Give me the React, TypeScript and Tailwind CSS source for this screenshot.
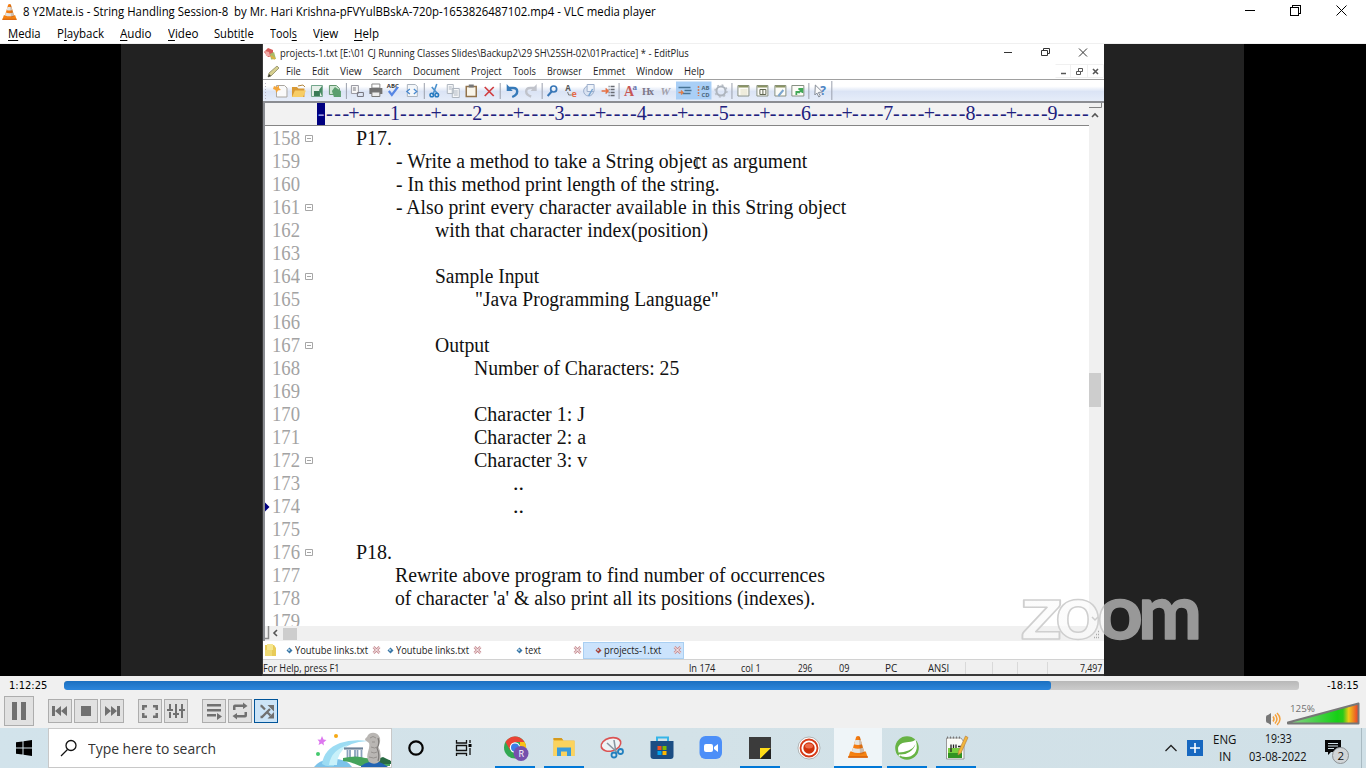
import { useLayoutEffect, useRef, type ReactNode } from "react";

/** Text whose glyphs are condensed or widened to fill the box it is given. */
function Fit({ children, className = "" }: { children: ReactNode; className?: string }) {
  const box = useRef<HTMLSpanElement>(null);
  const text = useRef<HTMLSpanElement>(null);
  useLayoutEffect(() => {
    if (box.current && text.current) {
      const natural = text.current.offsetWidth;
      if (natural > 0) text.current.style.transform = `scaleX(${box.current.clientWidth / natural})`;
    }
  }, []);
  return (
    <span ref={box} className={`inline-block shrink-0 whitespace-pre ${className}`}>
      <span ref={text} className="inline-block origin-left">
        {children}
      </span>
    </span>
  );
}

function Cone({ className }: { className: string }) {
  return (
    <svg className={className} viewBox="0 0 20 22">
      <path d="M2.2 15.5h15.6l2 6H.2z" fill="#f58312" />
      <path d="M.2 20.2h19.6v1.6H.2z" fill="#d9620b" />
      <path d="M8.2.8q1.800-1.400 3.600 0L16.500 17q-6.500 3.400-13 0z" fill="#f47b10" />
      <path d="M7.300 4h5.400l1.300 4.300q-4 1.600-8 0zM5 11.800q5 1.800 10 0l1.200 3.900q-6.200 2.400-12.400 0z" fill="#e4e4e1" />
      <path d="M11.800.8 16.500 17q-2.200 1.200-4.300 1.500L10.600.3z" fill="#8a4a20" opacity=".25" />
    </svg>
  );
}

const menus: [string, string, string, string, string][] = [
  ["", "M", "edia", "w-[33px]", "mr-[16px]"],
  ["P", "l", "ayback", "w-[47px]", "mr-[16px]"],
  ["", "A", "udio", "w-[32px]", "mr-[16px]"],
  ["", "V", "ideo", "w-[30px]", "mr-[16px]"],
  ["Subti", "t", "le", "w-[40px]", "mr-[16px]"],
  ["Tool", "s", "", "w-[27px]", "mr-[16px]"],
  ["V", "i", "ew", "w-[25px]", "mr-[16px]"],
  ["", "H", "elp", "w-[25px]", ""],
];

function VlcHeader() {
  return (
    <header className="h-[44px] border-b border-[#f0f0f0] bg-white text-[12px] text-black">
      <div className="flex h-[23px] items-center pl-[2px]">
        <Cone className="mt-px h-[16px] w-[15px]" />
        <Fit className="ml-[6px] w-[633px] leading-[23px]">
          8 Y2Mate.is - String Handling Session-8{"  "}by Mr. Hari Krishna-pFVYulBBskA-720p-1653826487102.mp4 - VLC media player
        </Fit>
        <svg className="ml-auto h-[23px] w-[130px] text-black" viewBox="1236 0 130 23" fill="none" stroke="currentColor" shapeRendering="crispEdges">
          <path d="M1245 10.5h10M1290.500 7.500h8v8h-8zM1292.500 7v-1.500h8v8h-1.500" />
          <path d="M1336.500 5.500l10 10M1346.500 5.500l-10 10" shapeRendering="auto" />
        </svg>
      </div>
      <nav className="flex h-[20px] items-center pt-[2px] pl-[8px]">
        {menus.map(([a, u, b, w, m]) => (
          <Fit key={a + u + b} className={`${w} ${m} leading-[18px]`}>
            {a}
            <span className="underline decoration-1 underline-offset-2">{u}</span>
            {b}
          </Fit>
        ))}
      </nav>
    </header>
  );
}

const editorMenus: [string, string][] = [
  ["File", "ml-[6px] w-[15px]"],
  ["Edit", "ml-[11px] w-[17px]"],
  ["View", "ml-[11px] w-[22px]"],
  ["Search", "ml-[11px] w-[29px]"],
  ["Document", "ml-[11px] w-[47px]"],
  ["Project", "ml-[11px] w-[31px]"],
  ["Tools", "ml-[11px] w-[23px]"],
  ["Browser", "ml-[11px] w-[35px]"],
  ["Emmet", "ml-[11px] w-[32px]"],
  ["Window", "ml-[11px] w-[37px]"],
  ["Help", "ml-[11px] w-[21px]"],
];

function Toolbar() {
  return (
    <svg className="block h-[21px] w-full" viewBox="262 80 842 21" fill="none">
      <path d="M264.500 83v16" stroke="#b9b4c4" strokeDasharray="1 2" />
      <path d="M345.500 83v16M423.500 83v16M499.500 83v16M541.500 83v16M618.500 83v16M731.500 83v16M808.500 83v16M831.500 81v19" stroke="#9ba0ad" />
      <path d="M675.500 81.500h35.500v18h-35.500z" fill="#a9cff6" />
      {/* new, open, save, save all */}
      <path d="M275.500 85.500h8l2.500 2.500v9h-10.500z" fill="#fafafa" stroke="#aaa6a0" />
      <path d="m273 86 3 1 2-2v3l2 2-3 .500-1.500 2.500-1-3-2.500-1z" fill="#f4a63a" />
      <path d="M291 87h5l1.500 1.500h6V97H291z" fill="#d99a35" />
      <path d="m291 97 3-6.500h11l-3 6.500z" fill="#f7cd66" />
      <path d="m297 86 5-1 2 2" stroke="#b0843c" />
      <path d="M310.500 85.500h11v11h-11z" fill="#e6efe9" stroke="#72a68c" />
      <path d="M313 91h6v5h-6z" fill="#397a56" />
      <path d="m318 90 3-4v10z" fill="#41885f" />
      <path d="M328.500 85.500h7l3 3v6h-10z" fill="#cfe6d4" stroke="#62956c" />
      <path d="m331 91 3-4 6 4v6h-7z" fill="#5b9f6f" />
      {/* print preview, print, spell, source */}
      <path d="M350.500 85.500h7v8h-7z" fill="#f7f7f7" stroke="#9a9aa3" />
      <path d="M352 88h3m-3 2h3M356.500 92.500h6v4h-6z" stroke="#75757e" />
      <path d="M371 84h8v4h-8z" fill="#fff" stroke="#8a8a8a" />
      <path d="M368.500 88h13v6h-13z" fill="#727272" />
      <path d="M371 92h8v4.500h-8z" fill="#eee" stroke="#777" />
      <text x="386" y="88.500" fontSize="6" fontWeight="700" fill="#333" textLength="12">ABC</text>
      <path d="m388 91 3 4 6-8" stroke="#5686e4" strokeWidth="2.200" />
      <path d="M406.500 84.500h8l2 2v10h-10z" fill="#f4f7fa" stroke="#aab3bd" />
      <path d="m409 89-3 2.500 3 2.500m4-5 3 2.500-3 2.500" stroke="#4a89cf" strokeWidth="1.300" />
      {/* cut, copy, paste, delete */}
      <path d="m436 84-4 11m-1-8 6 7" stroke="#4b91cd" strokeWidth="1.600" />
      <circle cx="431" cy="95" r="1.800" stroke="#267abf" strokeWidth="1.500" />
      <circle cx="436" cy="95" r="1.800" stroke="#267abf" strokeWidth="1.500" />
      <path d="M446.500 84.500h6v9h-6zM451.500 88.500h7v9h-7z" fill="#f7f8f9" stroke="#afb6bf" />
      <path d="M448 87h3m-3 2h3m2 2h4m-4 2h4m-4 2h4" stroke="#aeb7c1" />
      <path d="M465.500 86.500h10v10h-10z" fill="#f9f5ea" stroke="#92734b" strokeWidth="1.500" />
      <path d="M468 84.500h5v3h-5z" fill="#777" />
      <path d="m484 87 9 9m0-9-9 9" stroke="#d13d3f" strokeWidth="1.700" />
      {/* undo, redo */}
      <path d="M507.500 88h5q4 0 4 3.500t-5 5.500" stroke="#367ab9" strokeWidth="2.400" />
      <path d="M506 84v7h6z" fill="#367ab9" />
      <path d="M534.500 88h-5q-4 0-4 3.500t5 5" stroke="#c0c3cb" strokeWidth="2.400" />
      <path d="M536 84v7h-6z" fill="#c0c3cb" />
      {/* find, replace, find in files, goto */}
      <circle cx="553" cy="89" r="3" stroke="#3977b7" strokeWidth="1.700" />
      <path d="m551 91.500-4 4.500" stroke="#3977b7" strokeWidth="2" />
      <text x="564.500" y="91" fontSize="8" fontWeight="700" fill="#555">A</text>
      <text x="571" y="97" fontSize="9" fontWeight="700" fill="#e46c49">e</text>
      <path d="m567 92 1 3h3" stroke="#777" />
      <circle cx="588" cy="91" r="5" fill="#dae3f2" stroke="#9baecb" />
      <path d="M586.500 84.500h7v7h-7z" fill="#eef3fa" stroke="#9daecb" />
      <path d="m592 89-4 7" stroke="#78a5d1" strokeWidth="1.500" />
      <path d="M601 91h6m-2-2.500 2.500 2.500-2.500 2.500" stroke="#e66e3f" strokeWidth="1.500" />
      <path d="M608 86.500h1m1 0h4m-6 3h1m1 0h4m-6 3h1m1 0h4m-6 3h1m1 0h4" stroke="#686b73" strokeWidth="1.300" />
      {/* fonts and view toggles */}
      <text x="623.500" y="96.500" fontFamily="Liberation Serif" fontSize="14" fontWeight="700" fill="#c85855">A</text>
      <text x="632" y="90" fontFamily="Liberation Serif" fontSize="9" fontWeight="700" fill="#6775ae">a</text>
      <text x="641.500" y="95" fontFamily="Liberation Serif" fontSize="10.500" fontWeight="700" fill="#7d7788" textLength="12">Hx</text>
      <text x="660" y="95" fontFamily="Liberation Serif" fontSize="11" fontStyle="italic" fontWeight="700" fill="#a2a0aa">W</text>
      <path d="M678 87.500h12m-6 3h7m-9 3h8" stroke="#477395" strokeWidth="1.500" />
      <path d="M678 92.500h4m-1.500-2 2 2-2 2" stroke="#de804e" strokeWidth="1.300" />
      <path d="M698 86v10" stroke="#d47c55" strokeDasharray="2 1" strokeWidth="1.500" />
      <text x="701" y="90" fontSize="5" fontWeight="700" fill="#49657a" textLength="8" lengthAdjust="spacingAndGlyphs">AB</text>
      <text x="701" y="97" fontSize="5" fontWeight="700" fill="#49657a" textLength="8" lengthAdjust="spacingAndGlyphs">CD</text>
      <circle cx="720.500" cy="91" r="4.500" stroke="#adb4bd" strokeWidth="2" />
      <circle cx="720.500" cy="91" r="6" stroke="#b6bcc4" strokeWidth="1.400" strokeDasharray="2 2.700" />
      {/* windows */}
      <g fill="#fcfcf7" stroke="#879083">
        <path d="M737.500 85.500h11v10.500h-11zM756.500 85.500h11v10.500h-11zM774.500 85.500h11v10.500h-11zM791.500 85.500h12v10.500h-12z" />
      </g>
      <path d="M738 86.500h10m9 0h10m8 0h10" stroke="#8b9463" strokeWidth="2" />
      <path d="M740 90h7m-7 2h7m-7 2h7" stroke="#e0dcc0" />
      <path d="M759.500 89.500h6v5h-6zM762.500 89v6" stroke="#5e654f" />
      <path d="m783 90-5 6" stroke="#7ca6cf" strokeWidth="2" />
      <path d="M796 95v-3h3m-1-3h4v4m-4 0 4-4" stroke="#41a856" strokeWidth="1.800" />
      <path d="m815 85 7 7-4 .500 2 3.500-1.500 1-2-4-2 2z" fill="#fafafa" stroke="#878e98" />
      <text x="820" y="95" fontSize="12" fontWeight="700" fill="#4b83c3">?</text>
    </svg>
  );
}

const rulerCells = Array.from({ length: 94 }, (_, i) => {
  const n = i + 1;
  if (n % 10 === 0) return String(n / 10);
  return n % 5 === 0 ? "+" : "-";
});

type Line = { n: number; fold?: boolean; at?: string; text?: string; mark?: boolean };

const lines: Line[] = [
  { n: 158, fold: true, at: "ml-[42px] w-[36px]", text: "P17." },
  { n: 159, at: "ml-[82px] w-[411px]", text: "- Write a method to take a String object as argument" },
  { n: 160, at: "ml-[82px] w-[324px]", text: "- In this method print length of the string." },
  { n: 161, fold: true, at: "ml-[82px] w-[450px]", text: "- Also print every character available in this String object" },
  { n: 162, at: "ml-[121px] w-[273px]", text: "with that character index(position)" },
  { n: 163 },
  { n: 164, fold: true, at: "ml-[121px] w-[104px]", text: "Sample Input" },
  { n: 165, at: "ml-[161px] w-[244px]", text: '"Java Programming Language"' },
  { n: 166 },
  { n: 167, fold: true, at: "ml-[121px] w-[55px]", text: "Output" },
  { n: 168, at: "ml-[160px] w-[205px]", text: "Number of Characters: 25" },
  { n: 169 },
  { n: 170, at: "ml-[160px] w-[111px]", text: "Character 1: J" },
  { n: 171, at: "ml-[160px] w-[112px]", text: "Character 2: a" },
  { n: 172, fold: true, at: "ml-[160px] w-[113px]", text: "Character 3: v" },
  { n: 173, at: "ml-[199px] w-[11px]", text: ".." },
  { n: 174, at: "ml-[199px] w-[11px]", text: "..", mark: true },
  { n: 175 },
  { n: 176, fold: true, at: "ml-[42px] w-[36px]", text: "P18." },
  { n: 177, at: "ml-[81px] w-[430px]", text: "Rewrite above program to find number of occurrences" },
  { n: 178, at: "ml-[81px] w-[420px]", text: "of character 'a' & also print all its positions (indexes)." },
  { n: 179 },
];

function CodeLine({ n, fold, at, text, mark }: Line) {
  return (
    <div className="flex h-[23px] shrink-0 items-center font-['Liberation_Serif',serif] text-[20px] leading-[23px]">
      <svg className="h-[10px] w-[7px] shrink-0" viewBox="3 0 7 10">
        {mark && <path d="M3 .500 7.500 5 3 9.500z" fill="#000080" />}
      </svg>
      <Fit className="w-[28px] text-[#a3a3a3]">{n}</Fit>
      <svg className="ml-[5px] h-[9px] w-[9px] shrink-0" viewBox="0 0 9 9" fill="none" stroke="#a6a6a6">
        {fold && <path d="M.5 1.500h7v6h-7zM2 4.500h4" />}
      </svg>
      {text && <Fit className={`${at} text-[#111]`}>{text}</Fit>}
    </div>
  );
}

const tabs: [string, string, string, string][] = [
  ["Youtube links.txt", "w-[102px] pl-[6px]", "w-[73px]", "#3c78a8"],
  ["Youtube links.txt", "w-[101px] pl-[5px]", "w-[73px]", "#3c78a8"],
  ["text", "w-[100px] pl-[33px]", "w-[16px]", "#3c78a8"],
  ["projects-1.txt", "w-[101px] pl-[11px] bg-[#cbe3fc] border border-[#a9cff2]", "w-[57px]", "#a9443b"],
];

function Editor() {
  return (
    <section className="flex w-[842px] shrink-0 flex-col border-b-2 border-l border-[#3a3a3a] bg-white text-[10px] text-[#222]">
      <div className="flex h-[19px] shrink-0 items-center pl-px">
        <svg className="h-[13px] w-[12px]" viewBox="0 0 12 13">
          <path d="m0 5 4-4 5 2v6l-5 1z" fill="#d65b58" />
          <path d="m1 4 4 1 1 4-4 0z" fill="#efaaa6" />
          <path d="m6 7 4-2 2 7-5 .500z" fill="#a9bb69" />
          <path d="m7 9 4 3" stroke="#dfb240" strokeWidth="2" />
        </svg>
        <Fit className="ml-[4px] w-[409px] leading-[19px]">projects-1.txt [E:\01 CJ Running Classes Slides\Backup2\29 SH\25SH-02\01Practice] * - EditPlus</Fit>
        <svg className="ml-auto h-[19px] w-[110px]" viewBox="994 44 110 19" fill="none" stroke="#333">
          <path d="M1004 52.500h8M1041.500 50.500h6v5h-6zM1043.500 50v-1.500h6v5h-1.500M1079 48.500l8 8M1087 48.500l-8 8" />
        </svg>
      </div>
      <div className="flex h-[17px] shrink-0 items-center border-b border-[#a0a0a0] pl-[4px]">
        <svg className="h-[13px] w-[13px]" viewBox="0 0 13 13">
          <path d="m1 12 1-4 8-7 2 2-8 8z" fill="#d6cf8e" stroke="#8d8a66" strokeWidth=".8" />
          <path d="m1 12 1-3 2 2z" fill="#333" />
        </svg>
        {editorMenus.map(([label, box]) => (
          <Fit key={label} className={`${box} leading-[16px]`}>{label}</Fit>
        ))}
        <svg className="ml-auto h-[16px] w-[50px]" viewBox="1054 63 50 16" fill="none" stroke="#555">
          <path d="M1055.500 64.500h48v13h-48M1070.500 65v12M1087.500 65v12" stroke="#f0f0f0" />
          <path d="M1061 73.500h5" strokeWidth="1.500" />
          <path d="M1076.500 71.500h4v3h-4zM1078.500 71v-2.500h4v3h-2" />
          <path d="m1093 69 5 5m0-5-5 5" strokeWidth="1.600" />
        </svg>
      </div>
      <div className="h-[21px] shrink-0 bg-linear-to-b from-white from-30% via-[#dbe4f5] via-55% to-[#e6edf9]">
        <Toolbar />
      </div>
      <div className="flex min-h-0 flex-1 border-t-2 border-l-2 border-[#8b8d92]">
        <div className="flex w-[824px] shrink-0 flex-col">
          <div className="flex h-[23px] shrink-0 overflow-hidden border-b border-[#858585] bg-[#f2f2f2] pl-[52px] font-['Liberation_Serif',serif] text-[20px] leading-[21px] text-[#20207d]">
            {rulerCells.map((c, i) => (
              <span key={i} className={`flex w-[8.23px] shrink-0 justify-center ${i === 0 ? "bg-[#000080] text-[#9b9be0]" : ""}`}>
                {c}
              </span>
            ))}
          </div>
          <div className="relative flex h-[500px] flex-col overflow-hidden pt-px">
            {lines.map((l) => (
              <CodeLine key={l.n} {...l} />
            ))}
            <svg className="absolute top-[30px] left-[428px] h-[14px] w-[8px]" viewBox="0 0 8 14" fill="none" stroke="#222">
              <path d="M1.500 1.500h2l.500.500.500-.500h2M4 2v10M1.500 12.500h2l.500-.500.500.500h2" />
            </svg>
          </div>
          <div className="flex h-[15px] shrink-0 items-center bg-[#f0f0f0]">
            <svg className="h-[15px] w-[18px]" viewBox="1 0 18 15" fill="none" stroke="#555">
              <path d="M4.500 0v12.500H0" stroke="#8c8c8c" strokeWidth="1.500" />
              <path d="m13 4-3 3 3 3" strokeWidth="1.600" />
            </svg>
            <div className="h-[12px] w-[14px] bg-[#cdcdcd]" />
          </div>
        </div>
        <div className="flex flex-1 flex-col bg-[#f0f0f0]">
          <svg className="h-[270px] w-[14px]" viewBox="1089 103 14 270" fill="none">
            <path d="M1089 107.500h12.500V103" stroke="#828282" />
            <path d="m1092 117 3-3 3 3" stroke="#555" strokeWidth="1.600" />
          </svg>
          <div className="h-[34px] w-[12px] bg-[#cdcdcd]" />
          <svg className="mt-auto h-[34px] w-[14px]" viewBox="1089 607 14 34" fill="none" stroke="#555" strokeWidth="1.500">
            <path d="m1092 617 3 3 3-3" />
            <path d="M1094 637.500h6M1096 634.500h4M1098 631.500h2" strokeDasharray="1 1" stroke="#aaa" />
          </svg>
        </div>
      </div>
      <div className="flex h-[19px] shrink-0 items-center border-b border-[#d2d2d2]">
        <svg className="mr-[3px] ml-px h-[14px] w-[13px]" viewBox="0 0 13 14">
          <path d="M1 2h9l2 3v8H1z" fill="#e8cb58" />
          <path d="M3 1h6v6H3z" fill="#f5e58e" />
          <path d="M1 7h7v6H1z" fill="#efda74" />
        </svg>
        {tabs.map(([name, box, width, color], i) => (
          <div key={i} className={`flex h-[17px] shrink-0 items-center ${box}`}>
            <svg className="h-[7px] w-[7px] shrink-0" viewBox="0 0 7 7">
              <path d="M3.500.500l3 3-3 3-3-3z" fill={color} />
              <circle cx="3" cy="3" r="1" fill="#bde" />
            </svg>
            <Fit className={`ml-[2px] ${width} leading-[16px]`}>{name}</Fit>
            <svg className="mr-px ml-auto h-[8px] w-[9px] shrink-0" viewBox="0 0 9 8" fill="none">
              <path d="M1.500 1l6 6m0-6-6 6" stroke="#c78b91" strokeWidth="2.600" />
              <path d="M1.500 1l6 6m0-6-6 6" stroke="#fff" />
            </svg>
          </div>
        ))}
      </div>
      <div className="flex h-[14px] shrink-0 items-center bg-[#f0f0f0] pt-[2px] leading-[12px]">
        <Fit className="w-[77px]">For Help, press F1</Fit>
        <Fit className="ml-[349px] w-[26px]">ln 174</Fit>
        <Fit className="ml-[26px] w-[20px]">col 1</Fit>
        <Fit className="ml-[37px] w-[14px]">296</Fit>
        <Fit className="ml-[27px] w-[10px]">09</Fit>
        <Fit className="ml-[36px] w-[12px]">PC</Fit>
        <Fit className="ml-[31px] w-[21px]">ANSI</Fit>
        <svg className="ml-[12px] h-[12px] w-[92px]" viewBox="0 0 92 12" stroke="#d9d9d9">
          <path d="M4.500 0v12M31.500 0v12M56.500 0v12M86.500 0v12" />
        </svg>
        <Fit className="mr-[2px] ml-auto w-[22px]">7,497</Fit>
      </div>
    </section>
  );
}

function Video() {
  return (
    <main className="relative flex h-[632px] bg-black pr-[122px] pl-[121px]">
      <div className="flex flex-1 bg-[#222222] pl-[141px]">
        <Editor />
      </div>
      <svg className="absolute top-[510px] left-[1014px] h-[120px] w-[200px]" viewBox="1014 554 200 120">
        <defs>
          <linearGradient id="mark" gradientUnits="userSpaceOnUse" x1="1004" x2="1204" y1="0" y2="0">
            <stop offset=".5" stopColor="#fafafa" stopOpacity=".72" />
            <stop offset=".5" stopColor="#989898" />
          </linearGradient>
          <linearGradient id="markEdge" gradientUnits="userSpaceOnUse" x1="1004" x2="1204" y1="0" y2="0">
            <stop offset=".5" stopColor="#cfcfcf" />
            <stop offset=".5" stopColor="#989898" />
          </linearGradient>
        </defs>
        <text y="638.500" fontSize="76" className="font-['Lato',sans-serif] font-bold" fill="url(#mark)" stroke="url(#markEdge)" strokeWidth="1.500" strokeLinejoin="round">
          <tspan x="1020" textLength="43" lengthAdjust="spacingAndGlyphs">z</tspan>
          <tspan x="1055" textLength="46" lengthAdjust="spacingAndGlyphs">o</tspan>
          <tspan x="1097" textLength="46" lengthAdjust="spacingAndGlyphs">o</tspan>
          <tspan x="1138" textLength="64" lengthAdjust="spacingAndGlyphs">m</tspan>
        </text>
      </svg>
    </main>
  );
}

function Button({ box, active, children }: { box: string; active?: boolean; children: ReactNode }) {
  return (
    <button className={`flex shrink-0 items-center justify-center border ${active ? "border-[#005499] bg-[#cce4f7]" : "border-[#adadad] bg-[#e1e1e1]"} ${box}`}>
      <svg className="h-[22px] w-[22px]" viewBox="0 0 22 22" fill="#707070" stroke="none">
        {children}
      </svg>
    </button>
  );
}

function Controls() {
  return (
    <section className="h-[52px] bg-[#f0f0f0] text-[11px] text-black">
      <div className="flex h-[20px] items-center pl-[9px]">
        <Fit className="w-[38px] font-['DejaVu_Sans',sans-serif] leading-[20px]">1:12:25</Fit>
        <div className="mb-[2px] ml-[17px] h-[9px] w-[1235px] overflow-hidden rounded-[3px] bg-linear-to-b from-[#b8b8b8] to-[#cccccc]">
          <div className="h-full w-[987px] rounded-[3px] bg-linear-to-b from-[#1b70c0] to-[#2c86dc]" />
        </div>
        <Fit className="ml-[28px] w-[32px] font-['DejaVu_Sans',sans-serif] leading-[20px]">-18:15</Fit>
      </div>
      <div className="flex h-[30px] items-center pl-[4px]">
        <Button box="h-[30px] w-[30px]">
          <path d="M4 2h5v18H4zM13 2h5v18h-5z" />
        </Button>
        <Button box="ml-[14px] h-[24px] w-[24px]">
          <path d="M3 6h3v10H3zM12 6v10l-6-5zM18 6v10l-6-5z" />
        </Button>
        <Button box="ml-[2px] h-[24px] w-[24px]">
          <path d="M6 6h10v10H6z" />
        </Button>
        <Button box="ml-[2px] h-[24px] w-[24px]">
          <path d="M16 6h3v10h-3zM4 6v10l6-5zM10 6v10l6-5z" />
        </Button>
        <Button box="ml-[14px] h-[24px] w-[24px]">
          <path d="M3 5h5v2.500H5.500V10H3zM14 5h5v5h-2.500V7.500H14zM3 13h2.500v2.500H8V18H3zM16.500 13H19v5h-5v-2.500h2.500z" />
        </Button>
        <Button box="ml-[2px] h-[24px] w-[24px]">
          <path d="M4 4h2v5h2v2H2V9h2zM4 12h2v6H4zM10 4h2v9h2v2h-2v3h-2v-3H8v-2h2zM16 4h2v5h2v2h-2v7h-2v-7h-2V9h2z" />
        </Button>
        <Button box="ml-[14px] h-[24px] w-[24px]">
          <path d="M4 4h14v2.500H4zM4 9h14v2.500H4zM4 14h9v2.500H4zM14 13l5 3.500-5 3.500z" />
        </Button>
        <Button box="ml-[2px] h-[24px] w-[24px]">
          <path d="M4 10V6.500Q4 4.500 6 4.500h8V2.500L18.500 6 14 9V7H6.500v3zM18 12v3.500q0 2-2 2H8v2L3.500 16 8 13v2h7.500v-3z" />
        </Button>
        <Button active box="ml-[2px] h-[24px] w-[24px]">
          <path d="M5.500 17h1.500l8-8M5.500 6h1l3.500 3.500M12.500 12.500l3 3" stroke="#707070" strokeWidth="2.300" fill="none" />
          <path d="M12.500 5H19v6.500zM19 12v6.500h-6.500z" />
        </Button>
        <svg className="ml-auto h-[30px] w-[104px]" viewBox="1262 696 104 30" fill="none">
          <defs>
            <linearGradient id="volume" x1="0" x2="1">
              <stop offset="0" stopColor="#8fd08f" />
              <stop offset=".700" stopColor="#16d016" />
              <stop offset=".780" stopColor="#2bc91a" />
              <stop offset=".860" stopColor="#efcc16" />
              <stop offset="1" stopColor="#ed392b" />
            </linearGradient>
          </defs>
          <path d="M1266 717q0-2 2-2l3-2v12l-3-2q-2 0-2-2z" fill="#777" />
          <path d="M1273 716.500q2 2.500 0 5M1275 714.500q4 4.500 0 9M1277 713q6 6 0 12" stroke="#f5a13a" strokeWidth="1.500" />
          <path d="M1288 722.500 1358.500 703.500V723.500H1288z" fill="url(#volume)" stroke="#777" strokeWidth="2" strokeLinejoin="round" />
          <text x="1290" y="712" fontSize="9.500" fill="#707070" textLength="25" lengthAdjust="spacingAndGlyphs">125%</text>
        </svg>
      </div>
    </section>
  );
}

function Task({ box, underline, children }: { box: string; underline?: string; children: ReactNode }) {
  return (
    <div className={`flex shrink-0 flex-col items-center ${box}`}>
      <svg className="h-[38px] w-[28px]" viewBox="-14 -20 28 38">
        {children}
      </svg>
      {underline && <div className={`h-[2px] bg-[#0078d7] ${underline}`} />}
    </div>
  );
}

function Taskbar() {
  return (
    <footer className="flex h-[40px] bg-linear-to-r from-[#d2e3eb] via-[#d3e2e8] to-[#d0e0e7] text-[12px] text-[#111]">
      <div className="flex w-[48px] items-center justify-center">
        <svg className="h-[16px] w-[16px]" viewBox="0 0 16 16">
          <path d="M0 2.300 6.500 1.400v6.100H0zM7.500 1.200 16 0v7.500H7.500zM0 8.500h6.500v6.100L0 13.700zM7.500 8.500H16V16l-8.500-1.200z" />
        </svg>
      </div>
      <div className="flex w-[344px] items-center border border-[#c8c8c8] bg-white">
        <svg className="ml-[11px] h-[18px] w-[18px]" viewBox="0 0 18 18" fill="none" stroke="#111" strokeWidth="1.300">
          <circle cx="11" cy="6.500" r="5" />
          <path d="M7.500 10.500 1 17" />
        </svg>
        <Fit className="ml-[10px] w-[128px] text-[15px] leading-[38px] text-[#333]">Type here to search</Fit>
        <svg className="ml-auto h-[38px] w-[78px]" viewBox="313 729 78 38" fill="none">
          <path d="M314 767q6-8 20-8 13 0 18 8z" fill="#7cc3ea" />
          <path d="M322 764q2-15 18-21 12-4 28-2-20 1-29 11-5 6-5 14-8 1-12-2z" fill="#9cdcf3" />
          <path d="M329 765q2-15 19-20-11 8-11 20z" fill="#c8f1fa" />
          <path d="M344 748.500h19" stroke="#6f8399" strokeWidth="2.200" />
          <path d="M347.500 750v8m2.500-8v8m5-8v8m2.500-8v8m4-8v8" stroke="#8aa2bd" strokeWidth="1.800" />
          <path d="M343 758q14-3 22 0l25 2v6h-30q-8-4-17-5z" fill="#45a35c" />
          <path d="m377 759 6-2 8 4v3h-14z" fill="#286b43" />
          <path d="M361 766q14-10 27 1h-27z" fill="#2164b3" />
          <path d="M367 737q2-5 8-4 6 2 5 9l-2 4q4 7 2 15-5 5-11 1-3-4-1-10 2-6 1-9l-4-3q0-2 2-3z" fill="#b9b6b3" />
          <path d="M370 738q3-3 6 0M372 742h3m-4 5q4 2 6 0m-6 5q3 2 6 0m-8 5q5 2 8 0" stroke="#96928f" strokeWidth="1" />
          <path d="M378 738q2 6-1 10 3 7 1 13" stroke="#7c7977" strokeWidth="1.200" />
          <path d="m322 736 1.500 3.500 3 .500-3 2.500.500 3-2.500-2-3 1.500 1-3-2-2.500 3 .200z" fill="#dd78ef" />
          <circle cx="336" cy="736" r="2" fill="#f6a915" />
          <circle cx="318" cy="754" r="2" fill="#45c96e" />
        </svg>
      </div>
      <Task box="w-[48px]">
        <circle r="6.700" fill="none" stroke="#050505" strokeWidth="2.200" />
      </Task>
      <Task box="w-[48px]">
        <g fill="none" stroke="#111" strokeWidth="1.300">
          <path d="M-7.500-8v3h10v-3M-7.500-2.500h10v5h-10zM-7.500 8V5.500h10V8M6-8v3M6 0v7" />
        </g>
        <path d="M4.500-4h3v3h-3z" />
      </Task>
      <Task box="ml-[7px] w-[40px]" underline="w-[40px]">
        <circle cx="0" cy="-.5" r="11" fill="#32a852" />
        <path d="M-9.500-6A11 11 0 0 1 9.500-6H0L-5 2z" fill="#ea4335" />
        <path d="M9.600-6A11 11 0 0 1 0 10.500L5 2V-6z" fill="#fbc116" />
        <circle cx="0" cy="-.5" r="5.200" fill="#fff" />
        <circle cx="0" cy="-.5" r="4" fill="#3b7ce8" />
        <circle cx="6" cy="5.500" r="7.500" fill="#7650ad" />
        <text x="3.400" y="9" fontSize="9" fill="#fff">R</text>
      </Task>
      <Task box="ml-[9px] w-[40px]" underline="w-[40px]">
        <path d="M-10.500-10h8l2 2.500h11V8h-21z" fill="#f1bd3c" />
        <path d="M-10.500-7h21V8h-21z" fill="#fbd35e" />
        <path d="M-10.500-10h8l1.500 2h-9.500z" fill="#d59a1c" />
        <path d="M-7 8V-.5H7V8H3V3.500h-6V8z" fill="#399bdb" />
      </Task>
      <Task box="ml-[5px] w-[48px]">
        <g fill="none">
          <ellipse cx="-1" cy="-4" rx="10" ry="6.500" fill="#eef3f5" stroke="#db5353" strokeWidth="1.600" transform="rotate(-15)" />
          <path d="M-6-5 5 5M1-8 3 5" stroke="#8895a0" strokeWidth="1.600" />
          <circle cx="1" cy="7" r="2.500" stroke="#2380bf" strokeWidth="1.800" />
          <circle cx="7.500" cy="3.500" r="2.500" stroke="#2380bf" strokeWidth="1.800" />
        </g>
      </Task>
      <Task box="ml-[1px] w-[48px]">
        <path d="M-5-7v-3.500H6V-7" fill="none" stroke="#37b5e8" strokeWidth="2" />
        <path d="M-11.500-7h23V8q0 3-3 3h-17q-3 0-3-3z" fill="#1b4d83" />
        <path d="M-4.500-2h4v4h-4z" fill="#f25022" />
        <path d="M.5-2h4v4h-4z" fill="#7fba00" />
        <path d="M-4.500 3h4v4h-4z" fill="#00a4ef" />
        <path d="M.5 3h4v4h-4z" fill="#ffb900" />
      </Task>
      <Task box="ml-[1px] w-[48px]">
        <rect x="-11.500" y="-12" width="22.500" height="23" rx="6" fill="#4c8ff8" />
        <rect x="-7" y="-4" width="9" height="8" rx="2" fill="#fff" />
        <path d="M3-1 7-4v8L3 1z" fill="#fff" />
      </Task>
      <Task box="ml-[5px] w-[40px]" underline="w-[40px]">
        <path d="M-11-11h22V0L1 11h-12z" fill="#3b3b3b" />
        <path d="M0 0h11L0 11z" fill="#ffdc18" />
        <path d="M11 0v11H0z" fill="#222" />
      </Task>
      <Task box="ml-[5px] w-[48px]">
        <circle r="11" fill="#fff" stroke="#888" strokeWidth=".600" />
        <circle r="8.500" fill="none" stroke="#d63b18" strokeWidth="1.800" />
        <circle r="5.700" fill="#cf310a" />
        <ellipse cy="-2" rx="4" ry="2.500" fill="#ed6947" />
      </Task>
      <div className="ml-[1px] flex w-[48px] flex-col items-center bg-[#eff5f8]">
        <Cone className="mt-[8px] mb-[8px] h-[22px] w-[20px]" />
        <div className="h-[2px] w-full bg-[#0078d7]" />
      </div>
      <Task box="ml-[5px] w-[40px]" underline="w-[40px]">
        <circle r="11.800" fill="#67b345" />
        <path d="M8.500-8.500q3 9-1 14-4 4-9 3.500-4 0-6.500-2.500 6 .500 10.500-2.500 5-3.500 6-8-2 4.500-7 6.500-5 2-10 2-2-7 4-9.500 2-.700 6-1 5-.5 7-2.500z" fill="#fff" />
        <circle cx="-7.500" cy="7.500" r="1" fill="#fff" />
      </Task>
      <Task box="ml-[9px] w-[40px]" underline="w-[40px]">
        <path d="M-9.500-10H5l3 4V11H-9.500z" fill="#fafbf7" stroke="#999" />
        <path d="M-8 0H6v10H-8z" fill="#79ce40" />
        <path d="M-8 5H6v5H-8z" fill="#319323" />
        <path d="M-8.500-11.500v2m3-2v2m3-2v2m3-2v2m3-2v2" stroke="#777" />
        <path d="M-5-3.500V4m2.500-7.500V0M0-3.500V0m2-1.500h3" stroke="#222" strokeWidth="1.300" />
        <path d="m9.500-12 2.500 1.500L5 5 2 7l.500-3.500z" fill="#f2b63b" stroke="#b98243" strokeWidth=".700" />
      </Task>
      <svg className="ml-auto h-[40px] w-[40px]" viewBox="1164 728 40 40" fill="none">
        <path d="m1165.500 751 5.500-5.500 5.500 5.500" stroke="#222" strokeWidth="1.300" />
        <path d="M1187 740h16v16h-16z" fill="#1768c0" />
        <path d="M1195 743v10m-5-5h10" stroke="#fff" strokeWidth="1.600" />
      </svg>
      <div className="ml-[9px] flex flex-col pt-[3px] leading-[17px]">
        <Fit className="w-[23px]">ENG</Fit>
        <Fit className="ml-[6px] w-[12px]">IN</Fit>
      </div>
      <div className="ml-[13px] flex w-[58px] flex-col items-center pt-[2px] leading-[18px]">
        <Fit className="w-[27px]">19:33</Fit>
        <Fit className="w-[58px]">03-08-2022</Fit>
      </div>
      <svg className="ml-[17px] h-[40px] w-[42px]" viewBox="1324 728 42 40" fill="none">
        <path d="M1325 740h16v12h-10l-3 3v-3h-3z" fill="#080808" />
        <path d="M1328 743.500h10m-10 2.500h10m-10 2.500h6" stroke="#d1e0e6" />
        <circle cx="1340.500" cy="755.500" r="8" fill="#d1d5d7" stroke="#8c9194" />
        <text x="1337.500" y="760" fontSize="11.500" fill="#111">2</text>
        <path d="M1361.500 728v40" stroke="#a9bac2" />
      </svg>
    </footer>
  );
}

export default function App() {
  return (
    <div className="flex h-[768px] w-[1366px] flex-col overflow-hidden bg-white font-['Open_Sans','Noto_Sans',sans-serif]">
      <VlcHeader />
      <Video />
      <Controls />
      <Taskbar />
    </div>
  );
}
